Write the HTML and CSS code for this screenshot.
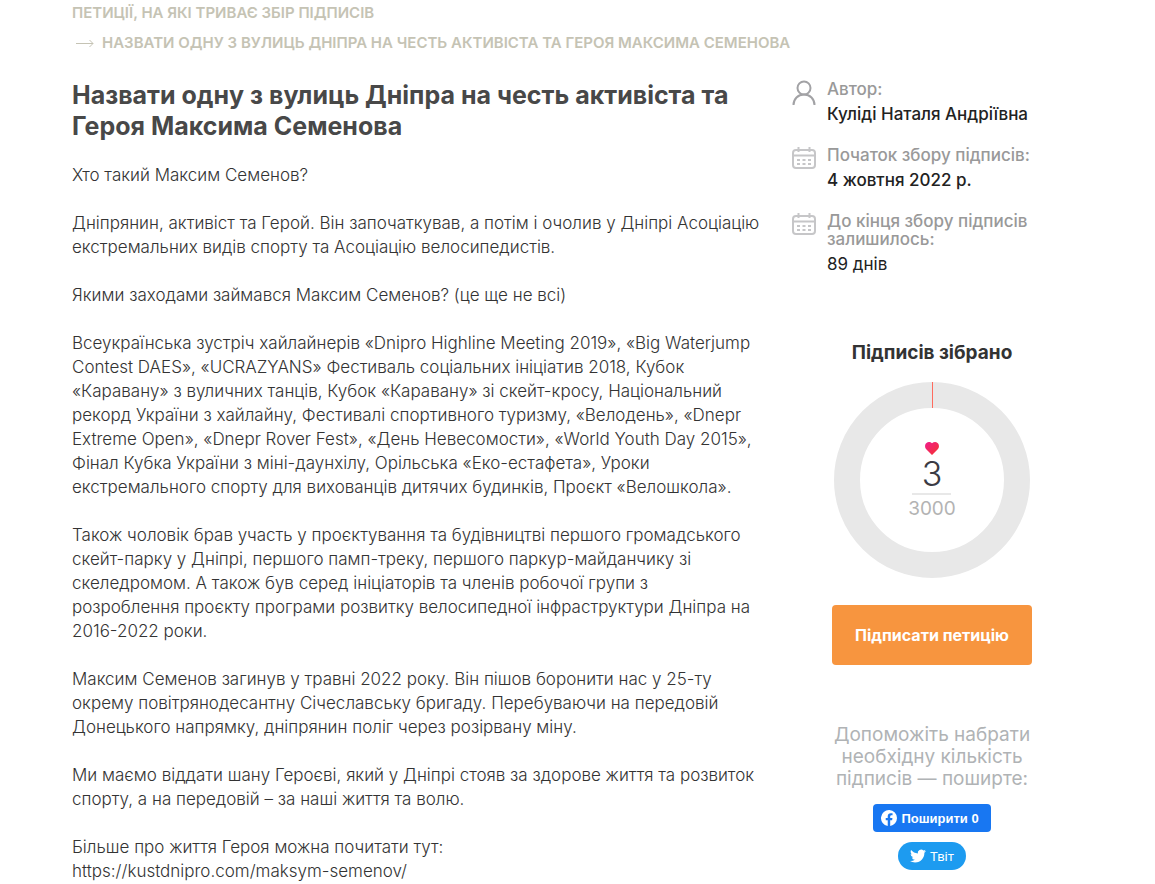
FILE: index.html
```html
<!DOCTYPE html>
<html lang="uk">
<head>
	<meta charset="UTF-8">
	<meta name="viewport" content="width=device-width, initial-scale=1">
	<title>Назвати одну з вулиць Дніпра на честь активіста та Героя Максима Семенова</title>
	<link rel="stylesheet" href="styles.css">
</head>
<body>
	<div class="container">
		<nav class="breadcrumbs">
			<a href="#">Петиції, на які триває збір підписів</a>
			<div class="current">
				<svg class="arrow" width="18" height="8" viewBox="0 0 18 8"><path d="M0 4.500h17M13.500 1l3.500 3.500L13.500 8"/></svg>
				<span>Назвати одну з вулиць Дніпра на честь активіста та Героя Максима Семенова</span>
			</div>
		</nav>
		<div class="petition">
			<main class="text">
				<h1>Назвати одну з вулиць Дніпра на честь активіста та<br>Героя Максима Семенова</h1>
				<p>Хто такий Максим Семенов?</p>
				<p>Дніпрянин, активіст та Герой. Він започаткував, а потім і очолив у Дніпрі Асоціацію<br>екстремальних видів спорту та Асоціацію велосипедистів.</p>
				<p>Якими заходами займався Максим Семенов? (це ще не всі)</p>
				<p>Всеукраїнська зустріч хайлайнерів «Dnipro Highline Meeting 2019», «Big Waterjump<br>Contest DAES», «UCRAZYANS» Фестиваль соціальних ініціатив 2018, Кубок<br>«Каравану» з вуличних танців, Кубок «Каравану» зі скейт-кросу, Національний<br>рекорд України з хайлайну, Фестивалі спортивного туризму, «Велодень», «Dnepr<br>Extreme Open», «Dnepr Rover Fest», «День Невесомости», «World Youth Day 2015»,<br>Фінал Кубка України з міні-даунхілу, Орільська «Еко-естафета», Уроки<br>екстремального спорту для вихованців дитячих будинків, Проєкт «Велошкола».</p>
				<p>Також чоловік брав участь у проєктування та будівництві першого громадського<br>скейт-парку у Дніпрі, першого памп-треку, першого паркур-майданчику зі<br>скеледромом. А також був серед ініціаторів та членів робочої групи з<br>розроблення проєкту програми розвитку велосипедної інфраструктури Дніпра на<br>2016-2022 роки.</p>
				<p>Максим Семенов загинув у травні 2022 року. Він пішов боронити нас у 25-ту<br>окрему повітрянодесантну Січеславську бригаду. Перебуваючи на передовій<br>Донецького напрямку, дніпрянин поліг через розірвану міну.</p>
				<p>Ми маємо віддати шану Героєві, який у Дніпрі стояв за здорове життя та розвиток<br>спорту, а на передовій – за наші життя та волю.</p>
				<p>Більше про життя Героя можна почитати тут:<br>https://kustdnipro.com/maksym-semenov/</p>
			</main>
			<aside class="sidebar">
				<div class="info">
					<div class="info-item">
						<svg class="user" width="24" height="26" viewBox="0 0 24 26"><circle cx="12" cy="8" r="6.500"/><path d="M1.500 25c0-6 4.500-10.500 10.500-10.500S22.500 19 22.500 25"/></svg>
						<dl>
							<dt>Автор:</dt>
							<dd>Куліді Наталя Андріївна</dd>
						</dl>
					</div>
					<div class="info-item">
						<svg class="calendar" width="24" height="24" viewBox="0 0 24 24"><rect x="1" y="4" width="22" height="18" rx="3"/><path d="M1 9.500h22M6.500 1v5M17.500 1v5"/><path class="days" d="M5 14h3M10.500 14h3M16 14h3M5 18h3M10.500 18h3M16 18h3"/></svg>
						<dl>
							<dt>Початок збору підписів:</dt>
							<dd>4 жовтня 2022 р.</dd>
						</dl>
					</div>
					<div class="info-item">
						<svg class="calendar" width="24" height="24" viewBox="0 0 24 24"><rect x="1" y="4" width="22" height="18" rx="3"/><path d="M1 9.500h22M6.500 1v5M17.500 1v5"/><path class="days" d="M5 14h3M10.500 14h3M16 14h3M5 18h3M10.500 18h3M16 18h3"/></svg>
						<dl>
							<dt>До кінця збору підписів<br>залишилось:</dt>
							<dd class="light">89 днів</dd>
						</dl>
					</div>
				</div>
				<h2>Підписів зібрано</h2>
				<div class="chart">
					<div class="votes">
						<svg width="14" height="13" viewBox="0 0 14 13">
							<defs>
								<linearGradient id="heart" x1="0" y1="0" x2="1" y2="1">
									<stop offset="0" stop-color="#f01c8c"/>
									<stop offset="1" stop-color="#f5342b"/>
								</linearGradient>
							</defs>
							<path fill="url(#heart)" d="M7 13L1 7C-.6 5 0 2 1.500 1 3-.4 5.500 0 7 1.300 8.500 0 11-.4 12.500 1 14 2 14.600 5 13 7z"/>
						</svg>
						<span class="count">3</span>
						<span class="total">3000</span>
					</div>
				</div>
				<button class="sign" type="button">Підписати петицію</button>
				<p class="share-text">Допоможіть набрати<br>необхідну кількість<br>підписів — поширте:</p>
				<button class="share facebook" type="button">
					<svg width="16" height="16" viewBox="0 0 24 24"><path fill="#fff" d="M24 12a12 12 0 1 0-13.900 11.900v-8.400H7.100V12h3V9.400c0-3 1.800-4.700 4.500-4.700 1.300 0 2.700.2 2.700.2v3h-1.500c-1.500 0-2 .9-2 1.900V12h3.400l-.5 3.500h-2.900v8.400A12 12 0 0 0 24 12z"/></svg>
					<span>Поширити 0</span>
				</button>
				<a class="share twitter" href="#">
					<svg width="16" height="16" viewBox="0 0 24 24"><path fill="#fff" d="M23.950 4.570a10 10 0 0 1-2.820.77 4.960 4.960 0 0 0 2.160-2.720c-.95.55-2 .95-3.130 1.180a4.920 4.920 0 0 0-8.380 4.480C7.690 8.100 4.070 6.130 1.640 3.160a4.820 4.820 0 0 0-.67 2.480c0 1.710.87 3.210 2.190 4.100a4.900 4.900 0 0 1-2.230-.62v.06a4.920 4.920 0 0 0 3.950 4.830 5 5 0 0 1-2.210.08 4.940 4.940 0 0 0 4.600 3.420A9.870 9.870 0 0 1 0 19.540a13.990 13.990 0 0 0 7.550 2.210c9.050 0 14-7.500 14-13.980 0-.21 0-.42-.02-.63a9.940 9.940 0 0 0 2.420-2.570z"/></svg>
					<span>Твіт</span>
				</a>
			</aside>
		</div>
	</div>
</body>
</html>
```
FILE: styles.css
```css
* {
	box-sizing: border-box;
}
body {
	margin: 0;
	background-color: #fff;
	color: #333;
	font-family: Inter, "Open Sans", sans-serif;
	font-size: 17px;
}
.container {
	padding: 0 83px 0 72px;
}
.breadcrumbs {
	padding-top: 3px;
	font-size: 15px;
	font-weight: 600;
	line-height: 20px;
	text-transform: uppercase;
	color: #c5c3b4;
}
.breadcrumbs a {
	display: block;
	color: inherit;
	text-decoration: none;
}
.current {
	display: flex;
	align-items: center;
	gap: 8px;
	margin-top: 10px;
	padding-left: 4px;
}
.arrow {
	flex: none;
	fill: none;
	stroke: #c5c3b4;
}
.petition {
	display: grid;
	grid-template-columns: 1fr 280px;
	gap: 30px;
	padding-top: 27px;
}
h1 {
	margin: 0 0 21px;
	font-size: 25px;
	font-weight: 700;
	line-height: 31px;
	color: #484848;
}
.text {
	white-space: nowrap;
}
.text p {
	margin: 0 0 24px;
	font-weight: 300;
	line-height: 24px;
}
.sidebar {
	display: flex;
	flex-direction: column;
	align-items: center;
}
.info {
	width: 100%;
}
.info-item {
	display: flex;
	align-items: flex-start;
	gap: 11px;
	margin-bottom: 22px;
}
.info-item svg {
	flex: none;
	fill: none;
	stroke-width: 2;
}
.user {
	stroke: #a2a2a5;
}
.calendar {
	stroke: #c6c6c8;
}
dl {
	margin: 0;
}
dt {
	line-height: 18px;
	font-weight: 500;
	color: #999;
}
dd {
	margin: 6px 0 0;
	line-height: 20px;
	font-weight: 500;
	color: #222;
}
.light {
	font-weight: 400;
}
h2 {
	margin: 47px 0 19px;
	font-size: 19px;
	font-weight: 700;
	line-height: 20px;
	color: #333;
}
.chart {
	display: flex;
	justify-content: center;
	width: 196px;
	height: 196px;
	border: 26px solid #e8e8e8;
	border-radius: 50%;
	position: relative;
}
.chart:before {
	content: "";
	position: absolute;
	top: -26px;
	left: 50%;
	width: 1px;
	height: 26px;
	background-color: #ff6b5e;
}
.votes {
	display: flex;
	flex-direction: column;
	align-items: center;
	padding-top: 34px;
}
.count {
	width: 39px;
	border-bottom: 2px solid #e8e8e8;
	font-size: 34px;
	font-weight: 300;
	line-height: 38px;
	text-align: center;
	color: #3b3b44;
}
.total {
	margin-top: 4px;
	font-size: 19px;
	line-height: 20px;
	color: #b3b3b3;
}
.sign {
	width: 200px;
	height: 60px;
	margin-top: 27px;
	border: 0;
	border-radius: 4px;
	background-color: #f7953f;
	color: #fff;
	font: 700 16px Inter, "Open Sans", sans-serif;
	cursor: pointer;
}
.share-text {
	margin: 59px 0 14px;
	font-size: 19px;
	line-height: 22px;
	text-align: center;
	color: #b0b3b5;
}
.share {
	display: flex;
	align-items: center;
	height: 28px;
	border: 0;
	color: #fff;
	font-size: 13px;
	text-decoration: none;
	cursor: pointer;
}
.facebook {
	gap: 4px;
	padding: 0 12px 0 8px;
	border-radius: 4px;
	background-color: #1877f2;
	font-family: "Liberation Sans", Arial, sans-serif;
	font-weight: 700;
}
.twitter {
	gap: 4px;
	margin-top: 10px;
	padding: 0 12px;
	border-radius: 14px;
	background-color: #1d9bf0;
	font-family: Roboto, sans-serif;
}
```
